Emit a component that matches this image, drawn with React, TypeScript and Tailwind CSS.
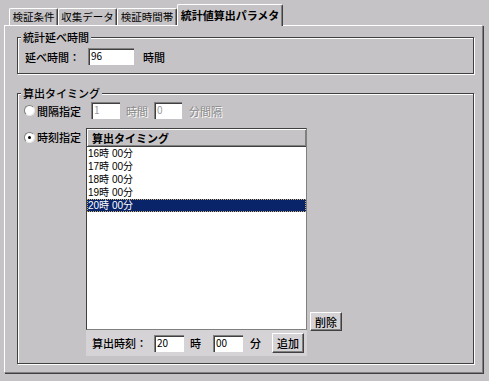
import React from "react";

const sunken =
  "bg-white border-t border-l border-[#808080] border-r-white border-b-white shadow-[inset_1px_1px_0_#404040]";
const raised =
  "bg-[#d6d3d6] border-t border-l border-white border-r border-b border-r-[#404040] border-b-[#404040] shadow-[inset_-1px_-1px_0_#808080]";

function Input({ value, w, disabled }: { value: string; w: string; disabled?: boolean }) {
  return (
    <div className={`${sunken} ${w} h-[17px] pl-[2px] text-[10px] leading-[13px] ${disabled ? "text-[#9a9a9a]" : "text-black"}`}>
      {value}
    </div>
  );
}

function Radio({ checked }: { checked?: boolean }) {
  return (
    <span className="w-[11px] h-[11px] rounded-full bg-white border border-t-[#808080] border-l-[#808080] border-r-[#e8e8e8] border-b-[#e8e8e8] flex items-center justify-center shrink-0">
      {checked && <span className="w-[3px] h-[3px] rounded-full bg-black" />}
    </span>
  );
}

function Tab({ label, w, active }: { label: string; w: string; active?: boolean }) {
  if (active) {
    return (
      <div className={`${w} h-[22px] -mb-[1px] relative z-10 bg-[#c6c3c6] border-t border-l border-white border-r border-r-[#404040] rounded-t-[2px] shadow-[inset_-1px_0_0_#808080] flex items-center justify-center font-bold text-[11px] pb-[2px]`}>
        {label}
      </div>
    );
  }
  return (
    <div className={`${w} h-[17px] bg-[#c6c3c6] border-t border-l border-white border-r border-r-[#404040] rounded-t-[2px] shadow-[inset_-1px_0_0_#808080] flex items-center justify-center text-[10.5px]`}>
      {label}
    </div>
  );
}

function Group({ label, h, mt, children }: { label: string; h: string; mt: string; children: React.ReactNode }) {
  return (
    <div className={`${h} ${mt} w-[457px] border border-[#404040] shadow-[1px_1px_0_#ffffff,inset_1px_1px_0_#ffffff] flex flex-col`}>
      <span className="-mt-[7px] ml-[3px] px-[2px] w-fit bg-[#c6c3c6] leading-[12px] font-medium text-[11px]">
        {label}
      </span>
      {children}
    </div>
  );
}

export default function App() {
  const rows = ["16時 00分", "17時 00分", "18時 00分", "19時 00分", "20時 00分"];
  return (
    <div className="w-[489px] h-[381px] bg-[#c6c3c6] text-black text-[11px] leading-[12px] font-['Noto_Sans_CJK_JP',sans-serif] overflow-hidden">
      <div className="pt-[4px] pl-[4px]">
        {/* tabs */}
        <div className="flex items-end h-[21px] pl-[5px]">
          <Tab label="検証条件" w="w-[49px]" />
          <Tab label="収集データ" w="w-[59px]" />
          <Tab label="検証時間帯" w="w-[60px]" />
          <Tab label="統計値算出パラメタ" w="w-[106px]" active />
        </div>
        {/* panel */}
        <div className="w-[479px] h-[348px] border-t border-l border-white border-r border-b border-r-[#808080] border-b-[#808080] shadow-[1px_1px_0_#404040] pl-[12px] flex flex-col">
          <Group label="統計延べ時間" h="h-[37px]" mt="mt-[11px]">
            <div className="flex items-center mt-[5px] pl-[7px]">
              <span className="w-[63px] font-medium">延べ時間：</span>
              <Input value="96" w="w-[46px]" />
              <span className="ml-[9px] font-medium">時間</span>
            </div>
          </Group>

          <Group label="算出タイミング" h="h-[271px]" mt="mt-[19px]">
            <div className="flex items-center mt-[3px] pl-[6px]">
              <div className="w-[67px] flex items-center gap-[2px]">
                <Radio />
                <span className="font-medium">間隔指定</span>
              </div>
              <Input value="1" w="w-[29px]" disabled />
              <span className="w-[34px] pl-[6px] text-[#8a8a8a] [text-shadow:1px_1px_0_#ffffff]">時間</span>
              <Input value="0" w="w-[28px]" disabled />
              <span className="ml-[7px] text-[#8a8a8a] [text-shadow:1px_1px_0_#ffffff]">分間隔</span>
            </div>

            <div className="flex items-start mt-[9px] pl-[6px]">
              <div className="w-[62px] h-[18px] flex items-center gap-[2px]">
                <Radio checked />
                <span className="font-medium">時刻指定</span>
              </div>
              <div className="flex flex-col w-[221px]">
                <div className="h-[202px] bg-white border border-t-[#404040] border-l-[#404040] border-r-[#808080] border-b-[#808080] flex flex-col">
                  <div className="h-[18px] shrink-0 bg-[#c6c3c6] border-b border-b-[#404040] shadow-[inset_1px_1px_0_#ffffff,inset_-1px_-1px_0_#808080] flex items-center pl-[5px] font-bold">
                    算出タイミング
                  </div>
                  {rows.map((r, i) => (
                    <div
                      key={r}
                      className={`h-[13px] shrink-0 text-[10px] font-['Liberation_Sans','Noto_Sans_CJK_JP',sans-serif] ${
                        i === 4
                          ? "bg-[#0a246a] text-white border border-dotted border-[#c8b070] leading-[11px]"
                          : "pl-[1px] leading-[13px]"
                      }`}
                    >
                      {r}
                    </div>
                  ))}
                </div>
                <div className="h-[26px] bg-[#d6d3d6] flex items-center pl-[6px]">
                  <span className="w-[62px] font-medium">算出時刻：</span>
                  <Input value="20" w="w-[30px]" />
                  <span className="ml-[6px] w-[11px] font-medium">時</span>
                  <span className="ml-[12px]">
                    <Input value="00" w="w-[30px]" />
                  </span>
                  <span className="ml-[7px] w-[11px] font-medium">分</span>
                  <button className={`${raised} ml-[11px] w-[32px] h-[20px] flex items-center justify-center text-[11px] font-medium`}>
                    追加
                  </button>
                </div>
              </div>
              <button className={`${raised} ml-[3px] mt-[184px] w-[32px] h-[19px] flex items-center justify-center text-[11px] font-medium`}>
                削除
              </button>
            </div>
          </Group>
        </div>
      </div>
    </div>
  );
}
